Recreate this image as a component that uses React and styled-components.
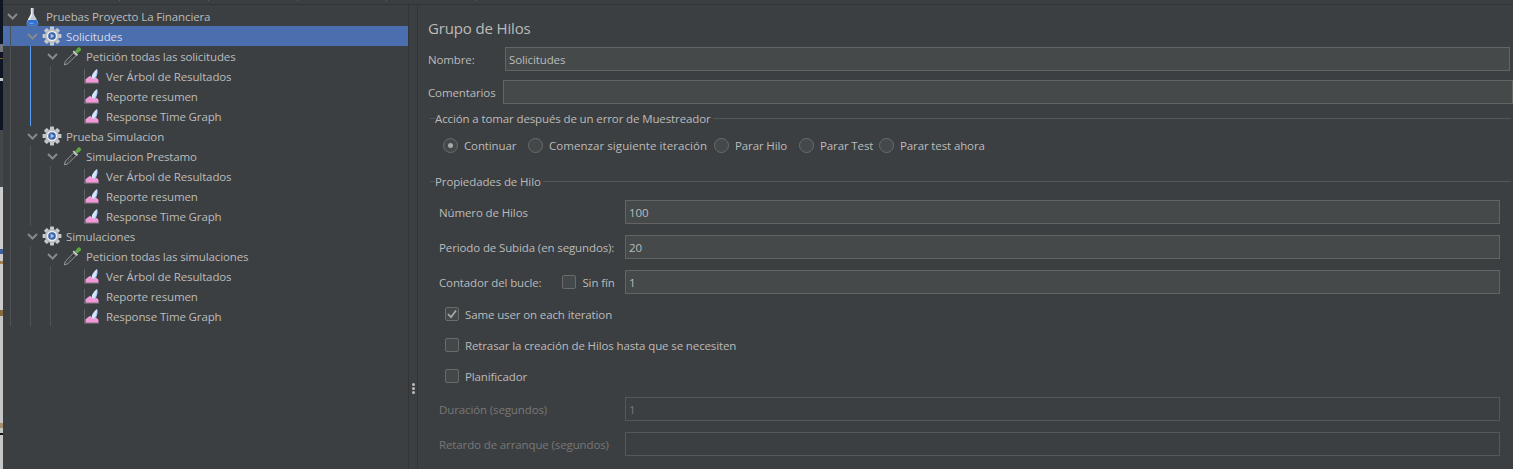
import React from "react";
import styled, { createGlobalStyle } from "styled-components";

const GlobalStyle = createGlobalStyle`
  html, body {
    margin: 0;
    padding: 0;
    height: 100%;
    overflow: hidden;
    background: #3c3f41;
  }
  body {
    font-family: "Open Sans", "Noto Sans", sans-serif;
    font-size: 11.5px;
    letter-spacing: -0.12px;
    color: #bbbbbb;
  }
`;

const Frame = styled.div`
  width: 1513px;
  height: 469px;
  display: flex;
  overflow: hidden;
`;

const Edge = styled.div`
  width: 3px;
  flex: none;
  display: flex;
  flex-direction: column;
`;

const EdgePart = styled.span`
  height: ${({ $h }) => $h}px;
  flex: none;
  background: ${({ $c }) => $c};
`;

const Window = styled.div`
  flex: 1;
  min-width: 0;
  display: flex;
  flex-direction: column;
`;

const TopStrip = styled.div`
  height: 4px;
  flex: none;
  display: flex;
  padding-left: 116px;
  gap: 88px;
  background: #3c3f41;
  border-bottom: 1px solid #323436;
`;

const Tick = styled.span`
  width: 1px;
  height: 1px;
  background: #5a5d5f;
`;

const Body = styled.div`
  flex: 1;
  display: flex;
  min-height: 0;
`;

const TreePane = styled.div`
  width: 406px;
  flex: none;
  padding-top: 1px;
  border-right: 1px solid #323436;
  box-sizing: border-box;
`;

const Splitter = styled.div`
  width: 9px;
  flex: none;
  display: flex;
  flex-direction: column;
  align-items: center;
  gap: 1px;
  padding-top: 378px;
  box-sizing: border-box;
  border-right: 1px solid #323436;
`;

const Dot = styled.span`
  width: 3px;
  height: 3px;
  border-radius: 50%;
  background: #bbbbbb;
`;

const Branch = styled.div`
  position: relative;

  &::before {
    content: "";
    position: absolute;
    left: ${({ $guide }) => $guide}px;
    top: 0;
    bottom: 0;
    width: 1px;
    background: ${({ $active }) => ($active ? "#589df6" : "#4f5254")};
  }
`;

const Row = styled.div`
  height: 20px;
  display: flex;
  align-items: center;
  padding-left: ${({ $depth }) => $depth * 20}px;
  background: ${({ $selected }) => ($selected ? "#4b6eaf" : "transparent")};
  white-space: nowrap;
  color: ${({ $selected }) => ($selected ? "#d4d9e2" : "#bbbbbb")};
`;

const Toggle = styled.span`
  width: 19px;
  height: 20px;
  flex: none;
  display: flex;
  align-items: center;
  justify-content: center;
`;

const IconSlot = styled.span`
  width: 20px;
  height: 20px;
  flex: none;
  margin-right: 4px;
  display: flex;
  align-items: center;
  justify-content: center;
`;

const Content = styled.main`
  flex: 1;
  min-width: 0;
  padding: 12px 0 0 10px;
`;

const Title = styled.h1`
  margin: 0 0 8px;
  font-size: 15px;
  font-weight: 400;
  letter-spacing: -0.15px;
  line-height: 22px;
  color: #bbbbbb;
`;

const NameRow = styled.div`
  display: flex;
  align-items: center;
  height: 24px;
  margin-bottom: ${({ $gap }) => $gap}px;
`;

const NameLabel = styled.label`
  width: ${({ $width }) => $width}px;
  flex: none;
`;

const TextBox = styled.div`
  box-sizing: border-box;
  height: 24px;
  flex: 1;
  min-width: 0;
  margin-right: ${({ $right }) => $right || 0}px;
  padding-left: 3px;
  display: flex;
  align-items: center;
  background: ${({ $disabled }) => ($disabled ? "#3c3f41" : "#45494a")};
  border: 1px solid ${({ $disabled }) => ($disabled ? "#555759" : "#646464")};
  color: ${({ $disabled }) => ($disabled ? "#777777" : "#bbbbbb")};
`;

const Section = styled.section`
  margin-right: 2px;
`;

const Legend = styled.div`
  display: flex;
  align-items: center;
  height: 18px;
  margin: ${({ $top }) => $top || 0}px 0 0 2px;

  &::before {
    content: "";
    width: 5px;
    height: 1px;
    background: #535658;
  }

  &::after {
    content: "";
    flex: 1;
    height: 1px;
    margin-left: 2px;
    background: #535658;
  }
`;

const RadioRow = styled.div`
  display: flex;
  align-items: center;
  height: 16px;
  margin: 10px 0 0 15px;
`;

const RadioItem = styled.label`
  width: ${({ $width }) => $width}px;
  flex: none;
  display: flex;
  align-items: center;
  gap: 6px;
  white-space: nowrap;
  letter-spacing: ${({ $track }) => $track ?? -0.12}px;
`;

const RadioMark = styled.span`
  box-sizing: border-box;
  width: 15px;
  height: 15px;
  flex: none;
  border-radius: 50%;
  border: 1px solid #6b6b6b;
  background: #43494a;
  display: flex;
  align-items: center;
  justify-content: center;

  &::after {
    content: "";
    display: ${({ $on }) => ($on ? "block" : "none")};
    width: 5px;
    height: 5px;
    border-radius: 50%;
    background: #a9a9a9;
  }
`;

const FieldRow = styled.div`
  display: flex;
  align-items: center;
  height: 24px;
  margin: ${({ $top }) => $top}px 11px 0 11px;
  color: ${({ $disabled }) => ($disabled ? "#777777" : "#bbbbbb")};
`;

const FieldLabel = styled.label`
  width: 186px;
  flex: none;
  display: flex;
  align-items: center;
  white-space: nowrap;
`;

const CheckRow = styled.label`
  display: flex;
  align-items: center;
  gap: 6px;
  height: 16px;
  margin: ${({ $top }) => $top}px 0 0 17px;
`;

const InlineCheck = styled.span`
  display: flex;
  align-items: center;
  gap: 6px;
  margin-left: 21px;
`;

const CheckMark = styled.span`
  box-sizing: border-box;
  width: 14px;
  height: 14px;
  border-radius: 2px;
  border: 1px solid #6b6b6b;
  background: #43494a;
  flex: none;
  display: flex;
  align-items: center;
  justify-content: center;
`;

const Chevron = () => (
  <svg width="11" height="7" viewBox="0 0 11 7">
    <path d="M1 1l4.500 4.500L10 1" fill="none" stroke="#868a8c" strokeWidth="2" />
  </svg>
);

const Flask = () => (
  <svg width="13" height="19" viewBox="0 0 13 19">
    <path d="M4.800 1h2.900v5.500c0 1.200 4.700 8 4.700 10.500 0 .9-.6 1.500-1.500 1.500H2.100c-.9 0-1.500-.6-1.500-1.500 0-2.500 4.200-9.300 4.200-10.500z" fill="#c3cad3" />
    <path d="M5.200 1.200h1v6.500L3 13.500H1.800c.8-2.300 3.400-5.900 3.400-7z" fill="#f1f4f8" />
    <path d="M2.400 13h8.200l1.700 4c0 .9-.6 1.500-1.500 1.500H2.100c-.9 0-1.500-.6-1.500-1.500z" fill="#2f72d6" />
    <path d="M3.500 16.300h4" stroke="#7fb0f2" strokeWidth="1" />
  </svg>
);

const Gear = () => {
  const teeth = [0, 45, 90, 135, 180, 225, 270, 315];
  return (
    <svg width="20" height="20" viewBox="0 0 20 20">
      {teeth.map((angle) => (
        <rect key={angle} x="8" y="0.600" width="4" height="5" rx="0.600" fill="#c6cace" transform={`rotate(${angle} 10 10)`} />
      ))}
      <circle cx="10" cy="10" r="7" fill="#b9bdc2" />
      <circle cx="10" cy="10" r="5.200" fill="#eceef1" />
      <circle cx="10" cy="10" r="3.800" fill="#3a62a8" />
      <path d="M8.600 7.600l3.800 2.400-3.800 2.400z" fill="#a9c4ee" />
    </svg>
  );
};

const Dropper = () => (
  <svg width="20" height="20" viewBox="0 0 20 20" style={{ transform: "translateX(1px)" }}>
    <path d="M1.400 18.800l1-3.600 8-8 2.500 2.500-8 8z" fill="#2f3335" stroke="#9ba1a5" strokeWidth="1" />
    <path d="M3 17.500l6.500-7" stroke="#5f6569" strokeWidth="1" />
    <path d="M9.600 5.800l4.200 4.200 1.300-1.300-4.200-4.200z" fill="#c9ced2" />
    <path d="M12 5.600l2.500-3.600c.8-.9 2-.9 2.900 0s.9 2.100 0 2.900L13.900 7.500z" fill="#5fa843" />
  </svg>
);

const Graph = () => (
  <svg width="16" height="16" viewBox="0 0 16 16">
    <path d="M.5 1v14.500H15" fill="none" stroke="#5d6265" strokeWidth="1" />
    <path d="M1.500 14.800v-3.500l4.500-3.600 3 2.800 3-1 2.500 2.300v3z" fill="#f29ad8" />
    <path d="M7.800 9.800c-.6-2.300 1.900-6.500 5.200-8.800.9 3.100.3 7.900-2.500 9.400-1 .5-2.400.3-2.700-.6z" fill="#d5e6fc" />
    <path d="M10.300 10.500c1.900-1.800 2.500-5.200 2.700-9.500.9 3.100.3 7.900-2.500 9.400z" fill="#8fb6ea" />
  </svg>
);

const Check = () => (
  <svg width="12" height="12" viewBox="0 0 12 12">
    <path d="M2 6l3 3.200L10 2.500" fill="none" stroke="#a9a9a9" strokeWidth="1.800" />
  </svg>
);

// strip of the window behind this one, showing at the left edge
const edgeParts = [
  [44, "#0e1626"], [8, "#74777d"], [6, "#0e1626"], [1, "#8a5a2c"], [19, "#0e1626"], [3, "#c8c8c8"],
  [49, "#0e1626"], [57, "#45484a"], [62, "#cccccc"], [5, "#3d5f9c"], [7, "#cccccc"], [3, "#a58050"],
  [46, "#cccccc"], [6, "#8a6a3c"], [107, "#c6c6c6"], [5, "#a88f6c"], [5, "#c6c6c6"], [2, "#111111"],
  [35, "#c6c6c6"], [6, "#6e5a3c"], [31, "#c6c6c6"], [5, "#5f8bc8"], [21, "#c6c6c6"],
];

const leaves = ["Ver Árbol de Resultados", "Reporte resumen", "Response Time Graph"];

const plans = [
  { group: "Solicitudes", sampler: "Petición todas las solicitudes", selected: true },
  { group: "Prueba Simulacion", sampler: "Simulacion Prestamo" },
  { group: "Simulaciones", sampler: "Peticion todas las simulaciones" },
];

const radios = [
  { label: "Continuar", width: 85, on: true },
  { label: "Comenzar siguiente iteración", width: 186, track: 0.06 },
  { label: "Parar Hilo", width: 85 },
  { label: "Parar Test", width: 80 },
  { label: "Parar test ahora", width: 120 },
];

const TreeNode = ({ depth, icon, label, selected, open = true }) => (
  <Row $depth={depth} $selected={selected}>
    <Toggle>{open && <Chevron />}</Toggle>
    <IconSlot>{icon}</IconSlot>
    {label}
  </Row>
);

const App = () => {
  return (
    <Frame>
      <GlobalStyle />
      <Edge>
        {edgeParts.map(([h, c], i) => (
          <EdgePart key={i} $h={h} $c={c} />
        ))}
      </Edge>
      <Window>
        <TopStrip>
          <Tick />
          <Tick />
          <Tick />
          <Tick />
          <Tick />
        </TopStrip>
        <Body>
          <TreePane>
            <TreeNode depth={0} icon={<Flask />} label="Pruebas Proyecto La Financiera" />
            <Branch $guide={7}>
              {plans.map((plan) => (
                <div key={plan.group}>
                  <TreeNode depth={1} icon={<Gear />} label={plan.group} selected={plan.selected} />
                  <Branch $guide={27} $active={plan.selected}>
                    <TreeNode depth={2} icon={<Dropper />} label={plan.sampler} />
                    <Branch $guide={47}>
                      {leaves.map((leaf) => (
                        <TreeNode key={leaf} depth={3} open={false} icon={<Graph />} label={leaf} />
                      ))}
                    </Branch>
                  </Branch>
                </div>
              ))}
            </Branch>
          </TreePane>
          <Splitter>
            <Dot />
            <Dot />
            <Dot />
          </Splitter>
          <Content>
            <Title>Grupo de Hilos</Title>
            <NameRow $gap={9}>
              <NameLabel $width={77}>Nombre:</NameLabel>
              <TextBox $right={3}>Solicitudes</TextBox>
            </NameRow>
            <NameRow $gap={5}>
              <NameLabel $width={75}>Comentarios</NameLabel>
              <TextBox />
            </NameRow>
            <Section>
              <Legend>Acción a tomar después de un error de Muestreador</Legend>
              <RadioRow>
                {radios.map((radio) => (
                  <RadioItem key={radio.label} $width={radio.width} $track={radio.track}>
                    <RadioMark $on={radio.on} />
                    {radio.label}
                  </RadioItem>
                ))}
              </RadioRow>
            </Section>
            <Section>
              <Legend $top={19}>Propiedades de Hilo</Legend>
              <FieldRow $top={10}>
                <FieldLabel>Número de Hilos</FieldLabel>
                <TextBox>100</TextBox>
              </FieldRow>
              <FieldRow $top={11}>
                <FieldLabel>Periodo de Subida (en segundos):</FieldLabel>
                <TextBox>20</TextBox>
              </FieldRow>
              <FieldRow $top={11}>
                <FieldLabel>
                  Contador del bucle:
                  <InlineCheck>
                    <CheckMark />
                    Sin fín
                  </InlineCheck>
                </FieldLabel>
                <TextBox>1</TextBox>
              </FieldRow>
              <CheckRow $top={12}>
                <CheckMark><Check /></CheckMark>
                Same user on each iteration
              </CheckRow>
              <CheckRow $top={15}>
                <CheckMark />
                Retrasar la creación de Hilos hasta que se necesiten
              </CheckRow>
              <CheckRow $top={15}>
                <CheckMark />
                Planificador
              </CheckRow>
              <FieldRow $top={13} $disabled>
                <FieldLabel>Duración (segundos)</FieldLabel>
                <TextBox $disabled>1</TextBox>
              </FieldRow>
              <FieldRow $top={11} $disabled>
                <FieldLabel>Retardo de arranque (segundos)</FieldLabel>
                <TextBox $disabled />
              </FieldRow>
            </Section>
          </Content>
        </Body>
      </Window>
    </Frame>
  );
};

export default App;
